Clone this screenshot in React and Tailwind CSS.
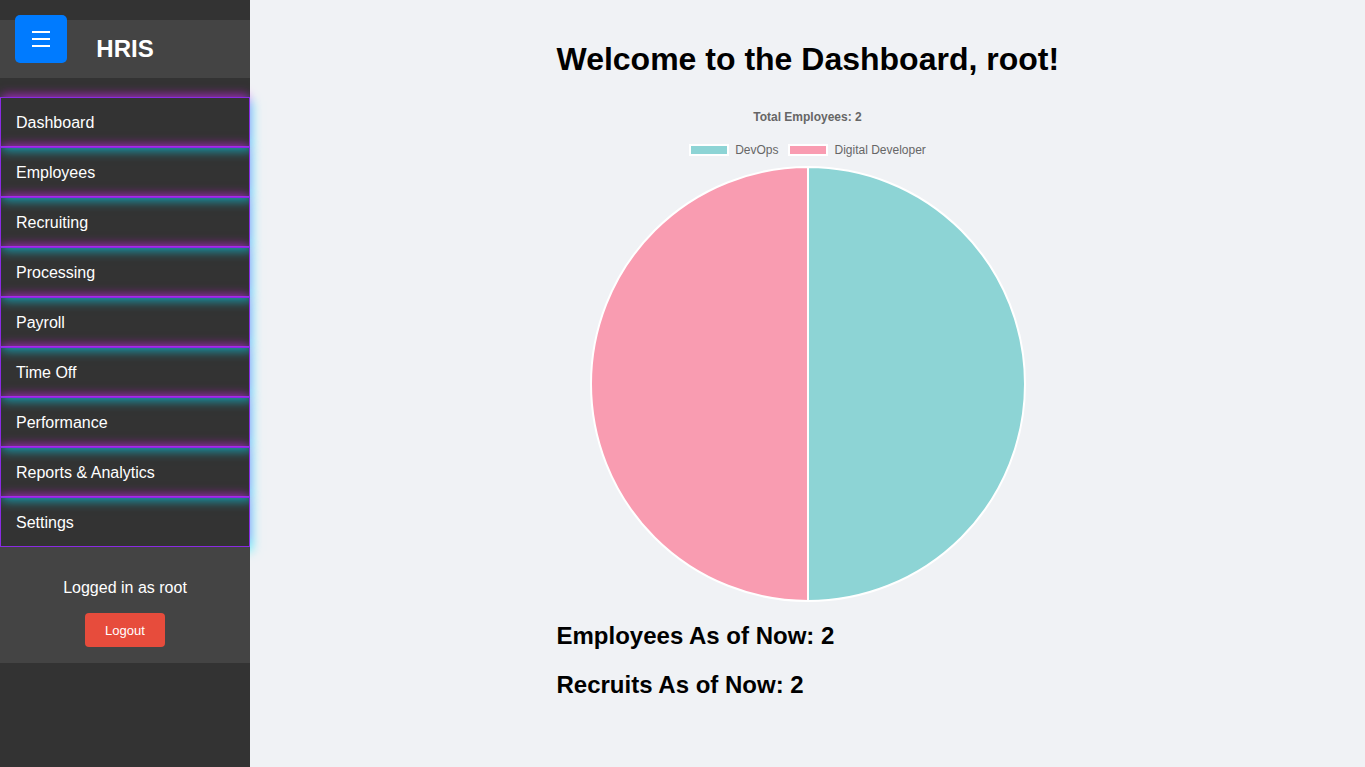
import React from "react";

const items = [
  "Dashboard",
  "Employees",
  "Recruiting",
  "Processing",
  "Payroll",
  "Time Off",
  "Performance",
  "Reports & Analytics",
  "Settings",
];

export default function App() {
  const cx = 251, cy = 218, r = 217;
  return (
    <div className="flex min-h-screen w-full bg-[#f0f2f5]" style={{ fontFamily: '"Liberation Sans", Arial, sans-serif' }}>
      <aside className="relative w-[250px] shrink-0 min-h-screen bg-[#333] pt-[20px] z-10">
        <div className="h-[58px] bg-[#444] flex items-center justify-center">
          <span className="text-white text-[24px] font-bold leading-none">HRIS</span>
        </div>
        <button className="absolute left-[15px] top-[15px] w-[52px] h-[48px] rounded-[5px] bg-[#007bff] flex flex-col items-center justify-center gap-[5px]">
          <span className="block w-[18px] h-[2px] bg-white" />
          <span className="block w-[18px] h-[2px] bg-white" />
          <span className="block w-[18px] h-[2px] bg-white" />
        </button>
        <nav className="mt-[19px]">
          {items.map((t) => (
            <div
              key={t}
              className="h-[50px] border border-[#8a2be2] flex items-center pl-[15px] pt-[2px] text-white text-[16px] shadow-[0_-5px_9px_-2px_rgba(255,0,255,0.5),2px_4px_10px_rgba(0,230,255,0.6)]"
            >
              {t}
            </div>
          ))}
        </nav>
        <div className="relative bg-[#444] pt-[32px] pb-[16px] flex flex-col items-center">
          <div className="text-white text-[16px] leading-[18px]">Logged in as root</div>
          <button className="mt-[16px] w-[80px] h-[34px] rounded-[4px] bg-[#e74c3c] text-white text-[13px] pt-[1px]">Logout</button>
        </div>
      </aside>
      <main className="flex-1 flex justify-center">
        <div className="w-[502px] pt-[41px]">
          <h1 className="text-[32px] font-bold leading-[37px] text-black whitespace-nowrap">Welcome to the Dashboard, root!</h1>
          <div className="mt-[32px] text-center text-[12px] font-bold leading-[14px] text-[#666]">Total Employees: 2</div>
          <div className="mt-[20px] flex justify-center items-center gap-[10px] h-[12px] text-[12px] leading-[12px] text-[#666]">
            <div className="flex items-center gap-[6px]">
              <span className="block w-[40px] h-[12px] bg-[#8dd4d5] border-2 border-white" />
              <span>DevOps</span>
            </div>
            <div className="flex items-center gap-[6px]">
              <span className="block w-[40px] h-[12px] bg-[#f99cb1] border-2 border-white" />
              <span>Digital Developer</span>
            </div>
          </div>
          <svg className="block mt-[10px]" width="502" height="436" viewBox="0 0 502 436">
            <path d={`M ${cx} ${cy} L ${cx} ${cy - r} A ${r} ${r} 0 0 1 ${cx} ${cy + r} Z`} fill="#8dd4d5" stroke="#fff" strokeWidth="2" />
            <path d={`M ${cx} ${cy} L ${cx} ${cy + r} A ${r} ${r} 0 0 1 ${cx} ${cy - r} Z`} fill="#f99cb1" stroke="#fff" strokeWidth="2" />
          </svg>
          <h2 className="mt-[20px] text-[24px] font-bold leading-[28px] text-black">Employees As of Now: 2</h2>
          <h2 className="mt-[21px] text-[24px] font-bold leading-[28px] text-black">Recruits As of Now: 2</h2>
        </div>
      </main>
    </div>
  );
}
